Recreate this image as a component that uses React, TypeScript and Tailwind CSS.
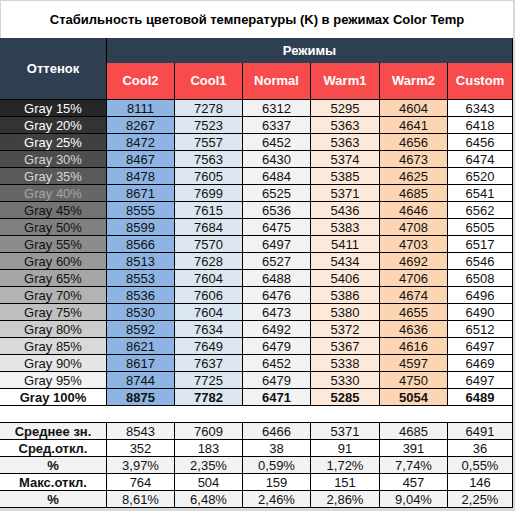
const modes = ["Cool2", "Cool1", "Normal", "Warm1", "Warm2", "Custom"];

// column fills, left to right
const colBg = ["bg-[#8db4e2]", "bg-[#dce6f1]", "bg-[#f2f2f2]", "bg-[#fde9d9]", "bg-[#fcd5b4]", "bg-white"];

const rows: [number, number[]][] = [
  [15, [8111, 7278, 6312, 5295, 4604, 6343]],
  [20, [8267, 7523, 6337, 5363, 4641, 6418]],
  [25, [8472, 7557, 6452, 5363, 4656, 6456]],
  [30, [8467, 7563, 6430, 5374, 4673, 6474]],
  [35, [8478, 7605, 6484, 5385, 4625, 6520]],
  [40, [8671, 7699, 6525, 5371, 4685, 6541]],
  [45, [8555, 7615, 6536, 5436, 4646, 6562]],
  [50, [8599, 7684, 6475, 5383, 4708, 6505]],
  [55, [8566, 7570, 6497, 5411, 4703, 6517]],
  [60, [8513, 7628, 6527, 5434, 4692, 6546]],
  [65, [8553, 7604, 6488, 5406, 4706, 6508]],
  [70, [8536, 7606, 6476, 5386, 4674, 6496]],
  [75, [8530, 7604, 6473, 5380, 4655, 6490]],
  [80, [8592, 7634, 6492, 5372, 4636, 6512]],
  [85, [8621, 7649, 6479, 5367, 4616, 6497]],
  [90, [8617, 7637, 6452, 5338, 4597, 6469]],
  [95, [8744, 7725, 6479, 5330, 4750, 6497]],
  [100, [8875, 7782, 6471, 5285, 5054, 6489]],
];

const stats: [string, string[], boolean][] = [
  ["Среднее зн.", ["8543", "7609", "6466", "5371", "4685", "6491"], true],
  ["Сред.откл.", ["352", "183", "38", "91", "391", "36"], false],
  ["%", ["3,97%", "2,35%", "0,59%", "1,72%", "7,74%", "0,55%"], true],
  ["Макс.откл.", ["764", "504", "159", "151", "457", "146"], false],
  ["%", ["8,61%", "6,48%", "2,46%", "2,86%", "9,04%", "2,25%"], true],
];

function grayText(p: number) {
  if (p <= 25) return "#ffffff";
  if (p <= 35) return "#d6d6d6";
  if (p === 40) return "#a6a6a6";
  return "#111111";
}

const cell = "flex h-[17px] items-center justify-center border-r border-b border-black text-[13px] leading-none";

export default function App() {
  return (
    <div
      className="flex h-[511px] w-[515px] bg-[#d9d9d9] text-[#111]"
      style={{ fontFamily: '"Liberation Sans", Arial, sans-serif' }}
    >
      <div className="grid h-fit w-[513px] grid-cols-[107px_68px_68px_68px_69px_68px_65px] bg-white">
        {/* Title */}
        <div className="col-span-7 flex h-[38px] items-center justify-center border-t border-l border-[#d4d4d4] text-[13px] font-bold text-black">
          Стабильность цветовой температуры (K) в режимах Color Temp
        </div>

        {/* Header */}
        <div className="row-span-2 flex items-center justify-center border-r border-b border-black bg-[#2e3f52] text-[13px] font-bold text-white">
          Оттенок
        </div>
        <div className="col-span-6 flex h-[25px] items-center justify-center border-r border-black bg-[#2e3f52] text-[13px] font-bold text-white">
          Режимы
        </div>
        {modes.map((m) => (
          <div
            key={m}
            className="flex h-[37px] items-center justify-center border-r border-b border-black bg-[#f84c4c] text-[13px] font-bold text-white"
          >
            {m}
          </div>
        ))}

        {/* Gray rows */}
        {rows.map(([p, vals]) => {
          const lv = Math.round((p / 100) * 255);
          const last = p === 100;
          return (
            <div key={p} className={`contents ${last ? "font-bold" : ""}`}>
              <div
                className={cell}
                style={{ backgroundColor: `rgb(${lv},${lv},${lv})`, color: grayText(p) }}
              >
                Gray {p}%
              </div>
              {vals.map((v, i) => (
                <div key={i} className={`${cell} ${colBg[i]}`}>
                  {v}
                </div>
              ))}
            </div>
          );
        })}

        {/* Spacer */}
        <div className="col-span-7 h-[17px] border-r border-b border-black bg-white" />

        {/* Stats */}
        {stats.map(([label, vals, shaded], r) => (
          <div key={r} className="contents">
            <div className={`${cell} font-bold ${shaded ? "bg-[#f2f2f2]" : "bg-white"}`}>{label}</div>
            {vals.map((v, i) => (
              <div key={i} className={`${cell} ${shaded ? "bg-[#f2f2f2]" : "bg-white"}`}>
                {v}
              </div>
            ))}
          </div>
        ))}
      </div>
    </div>
  );
}
